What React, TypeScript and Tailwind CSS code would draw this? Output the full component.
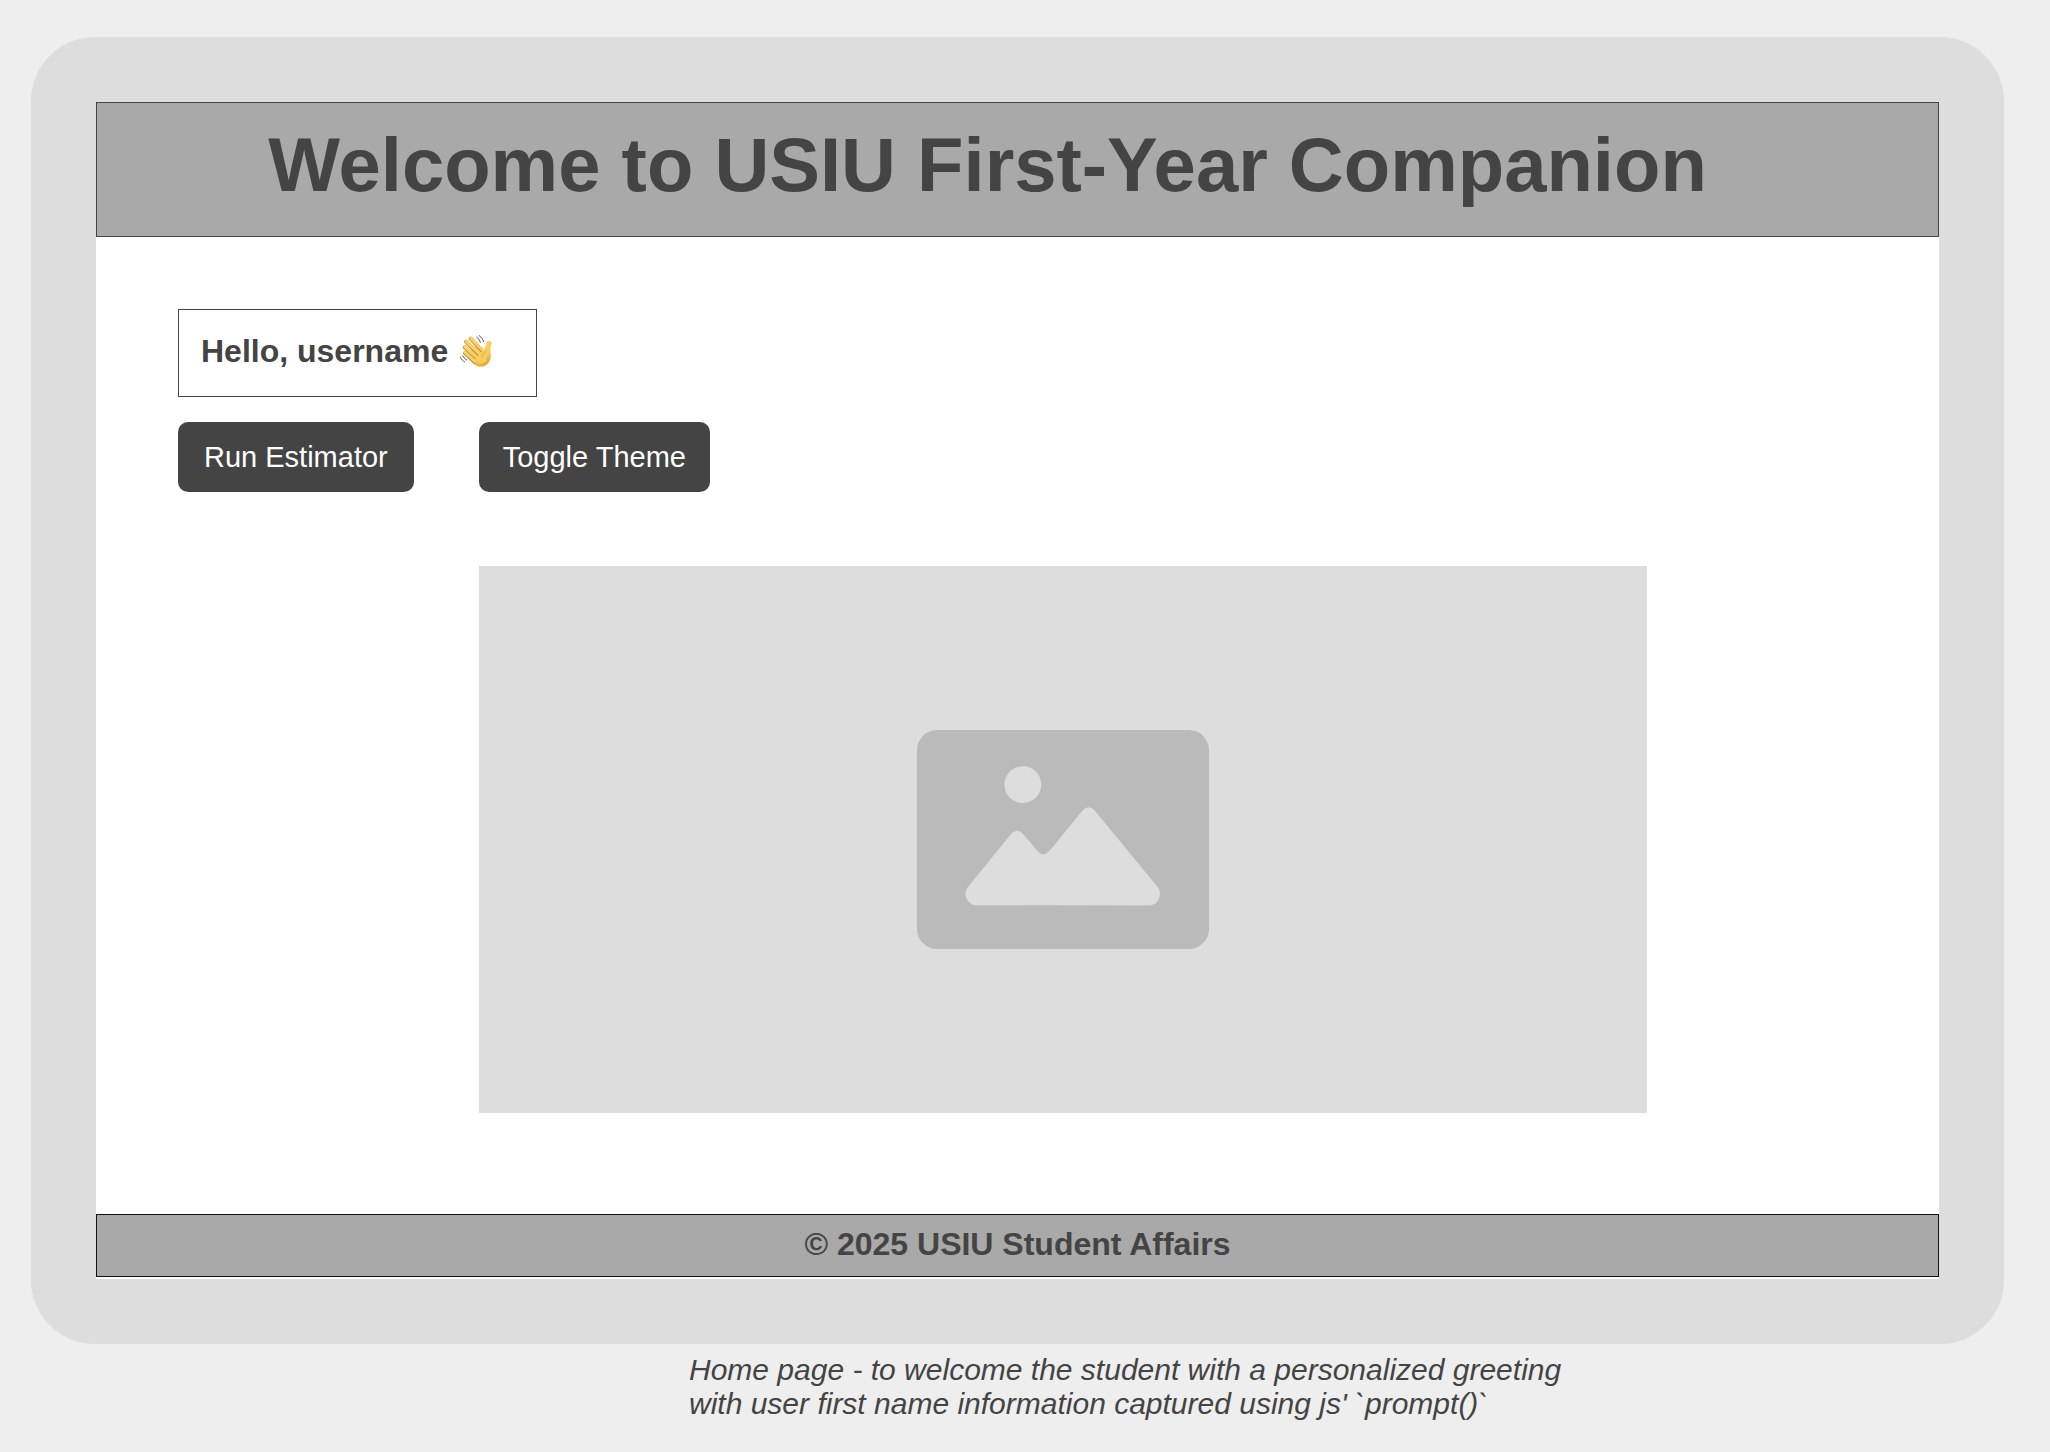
function WavingHand() {
  return (
    <svg viewBox="0 0 96 96" className="size-8 shrink-0" role="img" aria-label="Waving hand">
      <defs>
        <linearGradient id="skin" x1="0.2" y1="0" x2="0.7" y2="1">
          <stop offset="0" stopColor="#fbd772" />
          <stop offset="0.6" stopColor="#f9ca5c" />
          <stop offset="1" stopColor="#e0a03a" />
        </linearGradient>
      </defs>
      <path
        d="M36 32 L66 40 C72 44 75 42 76 35 L80 22 C83 16 93 17 95 23 C95 29 91 34 91 42 L92 60 C94 80 80 95 63 95 C54 95 47 91 41 86 L27 70 Z"
        fill="url(#skin)"
      />
      <g strokeLinecap="round" fill="none">
        <g stroke="#cf9038" strokeWidth="12">
          <path d="M15 54 L44 81" />
          <path d="M14 37 L50 72" />
          <path d="M18 20 L56 59" />
          <path d="M32 11 L66 47" />
        </g>
        <g stroke="#fad168" strokeWidth="9">
          <path d="M16 53 L46 80" />
          <path d="M15 36 L54 70" />
          <path d="M19 19 L60 58" />
          <path d="M33 10 L70 48" />
        </g>
        <path d="M52 74 L66 56 L78 56 L74 76 L60 82 Z" fill="#f9cc60" stroke="#f9cc60" strokeWidth="10" />
        <path d="M66 68 C67 58 71 52 78 50" stroke="#dba040" strokeWidth="2" />
        <g stroke="#55575c" strokeWidth="3">
          <path d="M50 6 C55 10 59 15 61 22" />
          <path d="M58 2 C65 7 69 13 71 20" />
          <path d="M8 62 C11 68 15 72 20 75" />
          <path d="M1 66 C4 73 8 78 14 81" />
        </g>
      </g>
    </svg>
  );
}

function ImagePlaceholder() {
  return (
    <div
      role="img"
      aria-label="Image placeholder"
      className="mt-[74px] mr-[210px] ml-[301px] flex aspect-[1168/547] items-center justify-center bg-[#dddddd]"
    >
      <svg viewBox="0 0 872 654" className="w-1/4" aria-hidden="true">
        <rect width="872" height="654" rx="60" fill="#bababa" />
        <circle cx="316" cy="163" r="55" fill="#dddddd" />
        <path
          d="M177 523 C152 523 136 492 150 472 L282 309 Q299 292 316 309 L360 362 Q377 380 395 362 L495 240 Q512 222 530 240 L720 470 C734 492 720 524 695 524 Z"
          fill="#dddddd"
        />
      </svg>
    </div>
  );
}

export default function App() {
  return (
    <div className="min-h-screen bg-[#eeeeee] pt-[37px] pr-[46px] pb-6 pl-[31px] font-['Liberation_Sans',Arial,sans-serif] text-[#444444]">
      <div className="rounded-[64px] bg-[#dddddd] p-[65px]">
        <div className="bg-white pb-0.5">
          <header className="border border-[#444444] bg-[#a9a9a9] pt-4 pr-[60px] pb-[25px]">
            <h1 className="text-center text-[76px] leading-[92px] font-bold">
              Welcome to USIU First-Year Companion
            </h1>
          </header>

          <main className="px-[82px] pt-[72px] pb-[101px]">
            <div className="flex w-fit items-center gap-3 border border-[#444444] pt-[21px] pr-[44px] pb-[25px] pl-[22px]">
              <h2 className="text-[32px] leading-[40px] font-bold">Hello, username</h2>
              <WavingHand />
            </div>

            <div className="mt-[25px] flex gap-[65px]">
              <button
                type="button"
                className="rounded-[10px] bg-[#444444] px-[26px] py-[13px] text-[29px] leading-[44px] text-white"
              >
                Run Estimator
              </button>
              <button
                type="button"
                className="rounded-[10px] bg-[#444444] px-6 py-[13px] text-[29px] leading-[44px] text-white"
              >
                Toggle Theme
              </button>
            </div>

            <ImagePlaceholder />
          </main>

          <footer className="border border-[#111111] bg-[#a9a9a9] pt-[9px] pb-3 text-center text-[32px] leading-[40px] font-bold">
            © 2025 USIU Student Affairs
          </footer>
        </div>
      </div>

      <p className="ml-[658px] pt-[9px] text-[30px] leading-[34px] italic">
        Home page - to welcome the student with a personalized greeting
        <br />
        with user first name information captured using js' `prompt()`
      </p>
    </div>
  );
}
